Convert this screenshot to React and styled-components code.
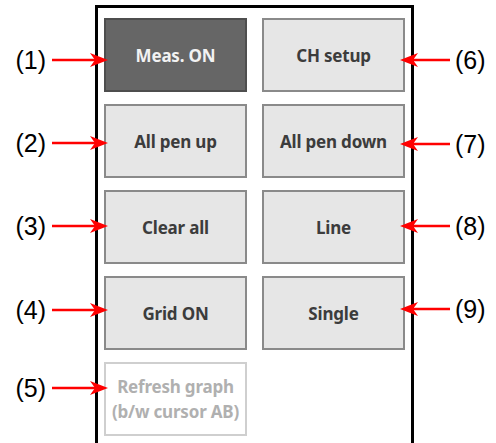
import React from 'react';
import styled, { createGlobalStyle } from 'styled-components';

const GlobalStyle = createGlobalStyle`
  html, body {
    margin: 0;
    padding: 0;
    background: #ffffff;
    overflow: hidden;
  }
  body {
    width: 496px;
    height: 443px;
  }
`;

const Page = styled.div`
  display: grid;
  grid-template-columns: 95px 319px 1fr;
  align-items: start;
  width: 496px;
  height: 443px;
`;

const Panel = styled.div`
  align-self: stretch;
  margin-top: 5px;
  border: 3px solid #000;
  border-bottom: none;
  padding: 10px 6px 0;
  box-sizing: border-box;
`;

const ButtonGrid = styled.div`
  display: grid;
  grid-template-columns: 143px 143px;
  grid-auto-rows: 74px;
  column-gap: 15px;
  row-gap: 12px;
`;

const PanelButton = styled.div`
  display: flex;
  align-items: center;
  justify-content: center;
  text-align: center;
  box-sizing: border-box;
  font-family: "Noto Sans", "DejaVu Sans", sans-serif;
  font-weight: 700;
  font-size: 17px;
  line-height: 25px;
  letter-spacing: -0.2px;
  border: 2px solid ${p => (p.active ? '#4e4e4e' : p.disabled ? '#cfcfcf' : '#8a8a8a')};
  background: ${p => (p.active ? '#666666' : p.disabled ? '#ffffff' : '#e6e6e6')};
  color: ${p => (p.active ? '#f2f2f2' : p.disabled ? '#b0b0b0' : '#3c3c3c')};
`;

const Notes = styled.div`
  position: relative;
  z-index: 1;
  margin-top: 18px;
  display: grid;
  grid-auto-rows: 74px;
  row-gap: 12px;
`;

const Note = styled.div`
  display: flex;
  align-items: center;
  flex-direction: ${p => (p.side === 'left' ? 'row' : 'row-reverse')};
  justify-content: flex-end;
  gap: ${p => (p.side === 'left' ? '6px' : '5px')};
  padding-left: ${p => (p.side === 'left' ? '14px' : '0')};
  margin-left: ${p => (p.side === 'left' ? '0' : '-14px')};
  margin-right: ${p => (p.side === 'left' ? '-13px' : '0')};
  transform: translateY(${p => p.shift}px);
`;

const NoteLabel = styled.span`
  font-family: "Liberation Sans", Arial, sans-serif;
  font-size: 25px;
  line-height: 1;
  color: #000;
  white-space: nowrap;
`;

const ArrowSvg = styled.svg`
  flex-shrink: 0;
  display: block;
`;

const Arrow = ({ side }) => {
  const w = side === 'left' ? 56 : 50;
  return (
    <ArrowSvg
      width={w}
      height="16"
      viewBox={`0 0 ${w} 16`}
      style={side === 'left' ? undefined : { transform: 'scaleX(-1)' }}
    >
      <line x1="0" y1="8" x2={w - 10} y2="8" stroke="#ff0000" strokeWidth="2.4" />
      <path d={`M${w} 8 L${w - 18} 1 L${w - 13} 8 L${w - 18} 15 Z`} fill="#ff0000" />
    </ArrowSvg>
  );
};

const buttons = [
  { left: { text: 'Meas. ON', active: true }, right: { text: 'CH setup' } },
  { left: { text: 'All pen up' }, right: { text: 'All pen down' } },
  { left: { text: 'Clear all' }, right: { text: 'Line' } },
  { left: { text: 'Grid ON' }, right: { text: 'Single' } },
  { left: { text: <>Refresh graph<br />(b/w cursor AB)</>, disabled: true }, right: null },
];

const leftNotes = [
  { label: '(1)', shift: 5 },
  { label: '(2)', shift: 2 },
  { label: '(3)', shift: -1 },
  { label: '(4)', shift: -3 },
  { label: '(5)', shift: -11 },
];

const rightNotes = [
  { label: '(6)', shift: 5 },
  { label: '(7)', shift: 3 },
  { label: '(8)', shift: -1 },
  { label: '(9)', shift: -4 },
];

export default function App() {
  return (
    <>
      <GlobalStyle />
      <Page>
        <Notes>
          {leftNotes.map(n => (
            <Note key={n.label} side="left" shift={n.shift}>
              <NoteLabel>{n.label}</NoteLabel>
              <Arrow side="left" />
            </Note>
          ))}
        </Notes>

        <Panel>
          <ButtonGrid>
            {buttons.map((row, i) => (
              <React.Fragment key={i}>
                <PanelButton active={row.left.active} disabled={row.left.disabled}>
                  {row.left.text}
                </PanelButton>
                {row.right ? <PanelButton>{row.right.text}</PanelButton> : <div />}
              </React.Fragment>
            ))}
          </ButtonGrid>
        </Panel>

        <Notes>
          {rightNotes.map(n => (
            <Note key={n.label} side="right" shift={n.shift}>
              <NoteLabel>{n.label}</NoteLabel>
              <Arrow side="right" />
            </Note>
          ))}
        </Notes>
      </Page>
    </>
  );
}
